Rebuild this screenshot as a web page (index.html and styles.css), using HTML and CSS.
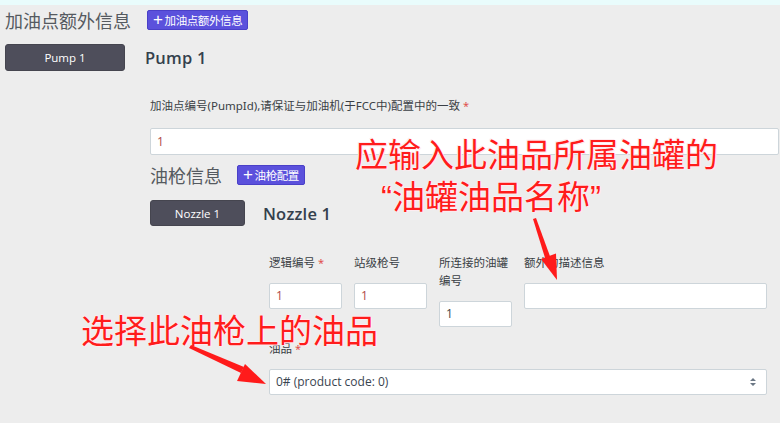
FILE: index.html
```html
<!DOCTYPE html>
<html lang="zh-CN">
<head>
<meta charset="utf-8">
<title>加油点额外信息</title>
<link rel="stylesheet" href="styles.css">
</head>
<body>
<div class="topbar"></div>
<div class="page">
  <div class="sec-head">
    <span class="sec-title">加油点额外信息</span>
    <button class="btn-add"><span class="plus">+</span>加油点额外信息</button>
  </div>
  <div class="item-row">
    <button class="btn-dark pump-btn">Pump 1</button>
    <span class="item-title">Pump 1</span>
  </div>
  <div class="pump-body">
    <div class="field-label">加油点编号(PumpId),请保证与加油机(于FCC中)配置中的一致 <span class="req">*</span></div>
    <div class="input wide red-val">1</div>

    <div class="sec-head nozzle-head">
      <span class="sec-title">油枪信息</span>
      <button class="btn-add"><span class="plus">+</span>油枪配置</button>
    </div>
    <div class="item-row nozzle-row">
      <button class="btn-dark nozzle-btn">Nozzle 1</button>
      <span class="item-title">Nozzle 1</span>
    </div>
    <div class="nozzle-body">
      <div class="fields">
        <div class="field">
          <div class="field-label">逻辑编号 <span class="req">*</span></div>
          <div class="input red-val">1</div>
        </div>
        <div class="field">
          <div class="field-label">站级枪号</div>
          <div class="input red-val">1</div>
        </div>
        <div class="field">
          <div class="field-label">所连接的油罐编号</div>
          <div class="input">1</div>
        </div>
        <div class="field">
          <div class="field-label">额外的描述信息</div>
          <div class="input"></div>
        </div>
      </div>
      <div class="field product">
        <div class="field-label">油品 <span class="req">*</span></div>
        <div class="input select">0# (product code: 0)
          <svg class="caret" width="8" height="10" viewBox="0 0 8 10"><path d="M1 4 L4 1 L7 4 Z M1 6 L4 9 L7 6 Z" fill="#6b7785"/></svg>
        </div>
      </div>
    </div>
  </div>
</div>

<div class="note note-tank">应输入此油品所属油罐的<br><span class="indent"><span class="q">“</span>油罐油品名称<span class="q">”</span></span></div>
<div class="note note-product">选择此油枪上的油品</div>
<svg class="arrows" width="780" height="423" viewBox="0 0 780 423">
  <polygon points="533,219 536,218 551,259 546,261" fill="#ff1b1b"/>
  <polygon points="557,280 541,259 556,253.5" fill="#ff1b1b"/>
  <polygon points="189,348 191,345 244,367 241,373" fill="#ff1b1b"/>
  <polygon points="266,384 237,381 245,364" fill="#ff1b1b"/>
</svg>
</body>
</html>
```

FILE: styles.css
```css
* { box-sizing: border-box; }
html, body {
  margin: 0;
  padding: 0;
  background: #ededed;
  width: 780px;
  height: 423px;
  overflow: hidden;
  position: relative;
  font-family: "Open Sans", "Noto Sans CJK SC", sans-serif;
  color: #333;
}
.topbar {
  height: 5px;
  background: #e9fcfc;
}
.page {
  padding-left: 5px;
}
.sec-head {
  display: flex;
  align-items: center;
  height: 22px;
  margin-top: 4px;
  gap: 16px;
}
.sec-title {
  font-family: "Noto Sans CJK SC", sans-serif;
  font-size: 18px;
  color: #555a60;
  line-height: 22px;
}
.btn-add {
  height: 20px;
  padding: 0 5px;
  border: 1px solid #4a40c8;
  border-radius: 2px;
  background: #5b51dc;
  color: #fff;
  font-family: "Noto Sans CJK SC", sans-serif;
  font-size: 11.5px;
  line-height: 18px;
  display: flex;
  align-items: center;
  letter-spacing: -0.4px;
}
.btn-add .plus {
  font-family: "Liberation Sans", sans-serif;
  font-size: 17px;
  font-weight: 300;
  margin-right: 2px;
  line-height: 18px;
}
.item-row {
  display: flex;
  align-items: center;
  margin-top: 13px;
  gap: 20px;
}
.btn-dark {
  background: #4e4e5b;
  border: 1px solid #45454f;
  border-radius: 3px;
  color: #fff;
  font-family: "Open Sans", sans-serif;
  font-size: 11.5px;
  height: 27px;
  padding: 0;
}
.pump-btn { width: 120px; }
.item-title {
  font-family: "Open Sans", sans-serif;
  font-size: 16.5px;
  font-weight: 600;
  color: #34404c;
  letter-spacing: 0.2px;
}
.pump-body {
  margin-left: 145px;
  margin-right: 1px;
}
.pump-body > .field-label {
  margin-top: 26px;
}
.field-label {
  font-family: "Noto Sans", "Noto Sans CJK SC", sans-serif;
  font-size: 11.5px;
  line-height: 18px;
  color: #3a3f45;
}
.req {
  color: #e0504c;
  font-size: 11px;
}
.input {
  background: #fff;
  border: 1px solid #cdd5da;
  border-radius: 2px;
  height: 26px;
  padding: 0 6px;
  font-family: "Open Sans", sans-serif;
  font-size: 12px;
  line-height: 24px;
  color: #444;
  margin-top: 11px;
}
.input.wide {
  height: 27px;
  margin-top: 13px;
  line-height: 25px;
}
.red-val { color: #b04a48; }
.nozzle-head {
  margin-top: 9px;
  gap: 15px;
}
.nozzle-row {
  margin-top: 14px;
  gap: 18px;
}
.nozzle-btn {
  width: 95px;
  height: 26px;
}
.nozzle-body {
  margin-left: 119px;
  margin-right: 12px;
}
.fields {
  display: grid;
  grid-template-columns: 73px 73px 73px 1fr;
  column-gap: 12px;
  margin-top: 28px;
  align-items: start;
}
.product {
  margin-top: 13px;
}
.select {
  display: flex;
  justify-content: space-between;
  align-items: center;
  color: #3a4450;
  padding-right: 9px;
}
.note {
  position: absolute;
  font-family: "Noto Sans CJK SC", sans-serif;
  font-size: 33px;
  line-height: 40px;
  color: #ff1c1c;
  text-shadow: 0 0 1px #fff, 0 0 1px #fff, 1px 1px 0 #fde8ee, -1px -1px 0 #fde8ee;
  white-space: nowrap;
}
.note-tank {
  left: 355px;
  top: 132px;
  line-height: 42px;
}
.note-tank .indent {
  margin-left: 26px;
}
.note .q {
  font-family: "Liberation Sans", sans-serif;
}
.note-product {
  left: 81px;
  top: 309px;
}
.arrows {
  position: absolute;
  left: 0;
  top: 0;
  pointer-events: none;
}
```
